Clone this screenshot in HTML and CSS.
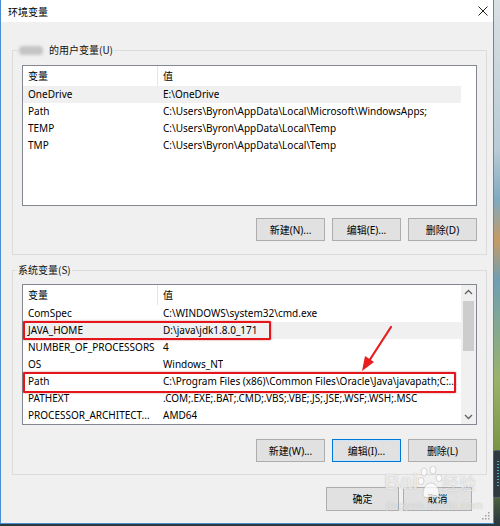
FILE: index.html
```html
<!DOCTYPE html>
<html lang="zh-CN">
<head>
<meta charset="utf-8">
<title>环境变量</title>
<link rel="stylesheet" href="styles.css">
</head>
<body>
<div class="window">
  <div class="titlebar">
    <span class="title">环境变量</span>
    <svg class="close" width="10" height="10" viewBox="0 0 10 10"><path d="M0.5 0.5 L9.5 9.5 M9.5 0.5 L0.5 9.5" stroke="#222" stroke-width="1" fill="none"/></svg>
  </div>
  <div class="client">
    <div class="group user">
      <div class="legend"><span class="blur"></span>的用户变量(U)</div>
      <div class="list">
        <div class="rows">
          <div class="row head"><div class="c1">变量</div><div class="c2">值</div></div>
          <div class="row sel"><div class="c1">OneDrive</div><div class="c2">E:\OneDrive</div></div>
          <div class="row"><div class="c1">Path</div><div class="c2">C:\Users\Byron\AppData\Local\Microsoft\WindowsApps;</div></div>
          <div class="row"><div class="c1">TEMP</div><div class="c2">C:\Users\Byron\AppData\Local\Temp</div></div>
          <div class="row"><div class="c1">TMP</div><div class="c2">C:\Users\Byron\AppData\Local\Temp</div></div>
        </div>
      </div>
      <div class="buttons">
        <button class="btn">新建(N)...</button>
        <button class="btn">编辑(E)...</button>
        <button class="btn">删除(D)</button>
      </div>
    </div>
    <div class="group sys">
      <div class="legend">系统变量(S)</div>
      <div class="list">
        <div class="rows">
          <div class="row head"><div class="c1">变量</div><div class="c2">值</div></div>
          <div class="row"><div class="c1">ComSpec</div><div class="c2">C:\WINDOWS\system32\cmd.exe</div></div>
          <div class="row sel"><div class="c1">JAVA_HOME</div><div class="c2">D:\java\jdk1.8.0_171</div></div>
          <div class="row"><div class="c1">NUMBER_OF_PROCESSORS</div><div class="c2">4</div></div>
          <div class="row"><div class="c1">OS</div><div class="c2">Windows_NT</div></div>
          <div class="row"><div class="c1">Path</div><div class="c2">C:\Program Files (x86)\Common Files\Oracle\Java\javapath;C:...</div></div>
          <div class="row"><div class="c1">PATHEXT</div><div class="c2">.COM;.EXE;.BAT;.CMD;.VBS;.VBE;.JS;.JSE;.WSF;.WSH;.MSC</div></div>
          <div class="row"><div class="c1">PROCESSOR_ARCHITECT...</div><div class="c2">AMD64</div></div>
        </div>
        <div class="scrollbar">
          <svg class="arrow" width="15" height="15" viewBox="0 0 15 15"><path d="M4 9 L7.5 5.5 L11 9" stroke="#606060" stroke-width="1.3" fill="none"/></svg>
          <div class="thumb"></div>
          <div class="track"></div>
          <svg class="arrow" width="15" height="15" viewBox="0 0 15 15"><path d="M4 6 L7.5 9.5 L11 6" stroke="#606060" stroke-width="1.3" fill="none"/></svg>
        </div>
        <div class="mark mark-java"></div>
        <div class="mark mark-path"></div>
        <svg class="red-arrow" width="40" height="52" viewBox="0 0 40 52">
          <path d="M34 2 L12 36" stroke="#e81e1e" stroke-width="2.2" stroke-linecap="round" fill="none"/>
          <path d="M5 46 L8 31 L17 37 Z" fill="#e81e1e"/>
        </svg>
      </div>
      <div class="buttons">
        <button class="btn">新建(W)...</button>
        <button class="btn focus">编辑(I)...</button>
        <button class="btn">删除(L)</button>
      </div>
    </div>
    <div class="footer">
      <button class="btn ok">确定</button>
      <button class="btn cancel">取消</button>
    </div>
    <div class="grip">
      <svg width="8" height="8" viewBox="0 0 8 8" fill="#a0a0a0"><rect x="6" y="0" width="1.5" height="1.5"/><rect x="3" y="3" width="1.5" height="1.5"/><rect x="6" y="3" width="1.5" height="1.5"/><rect x="0" y="6" width="1.5" height="1.5"/><rect x="3" y="6" width="1.5" height="1.5"/><rect x="6" y="6" width="1.5" height="1.5"/></svg>
    </div>
    <div class="watermark">
      <span class="wm-bai">Bai</span>
      <svg class="wm-paw" width="26" height="34" viewBox="0 0 26 34">
        <g fill="rgba(255,255,255,0.75)" stroke="rgba(120,120,120,0.35)" stroke-width="0.8">
          <ellipse cx="6" cy="6" rx="3" ry="4"/>
          <ellipse cx="15" cy="4" rx="3" ry="4"/>
          <ellipse cx="3" cy="15" rx="3" ry="3.5"/>
          <ellipse cx="21" cy="12" rx="3" ry="3.5"/>
          <path d="M5 28 C5 21 9 17 13 17 C17 17 21 21 21 28 C21 32 17 32 13 31 C9 32 5 32 5 28 Z"/>
        </g>
      </svg>
      <span class="wm-jy">经验</span>
      <span class="wm-url">jingyan.baidu.com</span>
    </div>
  </div>
</div>
<div class="gadget"><div class="gadget-bar"></div></div>
</body>
</html>
```

FILE: styles.css
```css
* { box-sizing: border-box; }
html, body { margin: 0; padding: 0; }
body {
  width: 500px;
  height: 526px;
  overflow: hidden;
  position: relative;
  background: linear-gradient(180deg, #d9e0e3 0px, #b8cbd6 150px, #7fa9bf 200px, #c59b64 240px, #6f9fb4 280px, #9ab36a 380px, #6e8d3a 470px, #2b3a3e 522px, #2b3a3e 526px);
  font-family: "Noto Sans", "Noto Sans CJK SC", sans-serif;
  font-size: 10px;
  color: #000;
}
.window {
  width: 494px;
  height: 524px;
  border: 1px solid #4a8fd0;
  border-top: none;
  background: #f0f0f0;
  display: flex;
  flex-direction: column;
}
.titlebar {
  height: 22px;
  flex: none;
  background: #fff;
  display: flex;
  align-items: center;
  justify-content: space-between;
  padding: 0 5px 0 7px;
  font-family: "Noto Sans CJK SC", sans-serif;
  font-size: 10px;
}
.close { margin-top: -1px; }
.client {
  flex: 1;
  position: relative;
  padding-top: 28px;
}
.group {
  position: relative;
  width: 475px;
  margin-left: 11px;
  border: 1px solid #dcdcdc;
  padding: 14px 9px 13px 9px;
}
.group.sys {
  margin-top: 15px;
  padding: 13px 9px 12px 9px;
}
.legend {
  position: absolute;
  top: -9px;
  left: 4px;
  height: 16px;
  line-height: 16px;
  padding: 0 1px;
  background: #f0f0f0;
  font-family: "Noto Sans CJK SC", sans-serif;
  color: #111;
  display: flex;
  align-items: center;
}
.user .legend { left: 5px; }
.blur {
  display: inline-block;
  width: 24px;
  height: 9px;
  margin-right: 6px;
  background: #c4c4c4;
  border-radius: 4px;
  filter: blur(1.5px);
}
.list {
  position: relative;
  height: 141px;
  border: 1px solid #828790;
  background: #fff;
  display: flex;
}
.rows { width: 438px; }
.row {
  display: flex;
  height: 17px;
  line-height: 17px;
  white-space: nowrap;
  overflow: hidden;
}
.row.head {
  height: 20px;
  line-height: 20px;
  font-family: "Noto Sans CJK SC", sans-serif;
}
.row.sel { background: #f0f0f0; }
.c1 {
  width: 135px;
  flex: none;
  padding-left: 5px;
  overflow: hidden;
}
.head .c1 { border-right: 1px solid #e5e5e5; }
.c2 {
  padding-left: 5px;
  overflow: hidden;
}
.scrollbar {
  margin-left: auto;
  width: 15px;
  background: #f0f0f0;
  display: flex;
  flex-direction: column;
}
.arrow { display: block; flex: none; }
.thumb {
  height: 50px;
  margin: 1px 2px 0 2px;
  background: #cdcdcd;
}
.track { flex: 1; }
.mark {
  position: absolute;
  border: 2px solid #e4161b;
  box-shadow: 0 0 2px rgba(160, 0, 0, 0.5);
  border-radius: 1px;
}
.mark-java { left: 0px; top: 36px; width: 248px; height: 19px; }
.mark-path { left: 0px; top: 87px; width: 433px; height: 21px; }
.red-arrow {
  position: absolute;
  left: 334px;
  top: 40px;
}
.buttons {
  display: flex;
  justify-content: flex-end;
  gap: 7px;
  margin-top: 12px;
  padding-right: 0;
}
.sys .buttons { margin-top: 14px; }
.btn {
  width: 69px;
  height: 23px;
  padding: 0;
  margin: 0;
  border: 1px solid #adadad;
  background: #e1e1e1;
  font-family: "Noto Sans", "Noto Sans CJK SC", sans-serif;
  font-size: 10px;
  color: #000;
  line-height: 20px;
}
.btn.focus { border: 1px solid #0078d7; box-shadow: inset 0 0 0 1px #cce4f7; }
.footer {
  display: flex;
  justify-content: flex-end;
  gap: 4px;
  margin-top: 12px;
  padding-right: 21px;
}
.btn.ok { width: 73px; height: 24px; }
.btn.cancel { width: 69px; height: 24px; }
.grip {
  position: absolute;
  right: 3px;
  bottom: 3px;
  line-height: 0;
}
.watermark {
  position: absolute;
  left: 383px;
  top: 440px;
  width: 100px;
  height: 60px;
  pointer-events: none;
}
.wm-bai {
  position: absolute;
  left: 0;
  top: 7px;
  font-family: "Liberation Sans", sans-serif;
  font-weight: bold;
  font-size: 22px;
  color: rgba(255, 255, 255, 0.72);
  text-shadow: 0 0 1px rgba(90, 90, 90, 0.45);
}
.wm-paw { position: absolute; left: 34px; top: 4px; }
.wm-jy {
  position: absolute;
  left: 58px;
  top: 8px;
  font-family: "Noto Sans CJK SC", sans-serif;
  font-size: 17px;
  color: rgba(255, 255, 255, 0.72);
  text-shadow: 0 0 1px rgba(90, 90, 90, 0.45);
}
.wm-url {
  position: absolute;
  left: 2px;
  top: 37px;
  font-family: "Liberation Sans", sans-serif;
  font-size: 11px;
  letter-spacing: 0.5px;
  color: rgba(255, 255, 255, 0.65);
  text-shadow: 0 0 1px rgba(90, 90, 90, 0.4);
}
.gadget {
  position: absolute;
  left: 493px;
  top: 450px;
  width: 8px;
  height: 48px;
  background: #2f3a40;
  border: 1px solid #556067;
  border-radius: 2px;
  padding: 10px 0 0 3px;
}
.gadget-bar {
  width: 2px;
  height: 26px;
  background: repeating-linear-gradient(180deg, #4aa7d8 0 1px, transparent 1px 3px);
}
```
